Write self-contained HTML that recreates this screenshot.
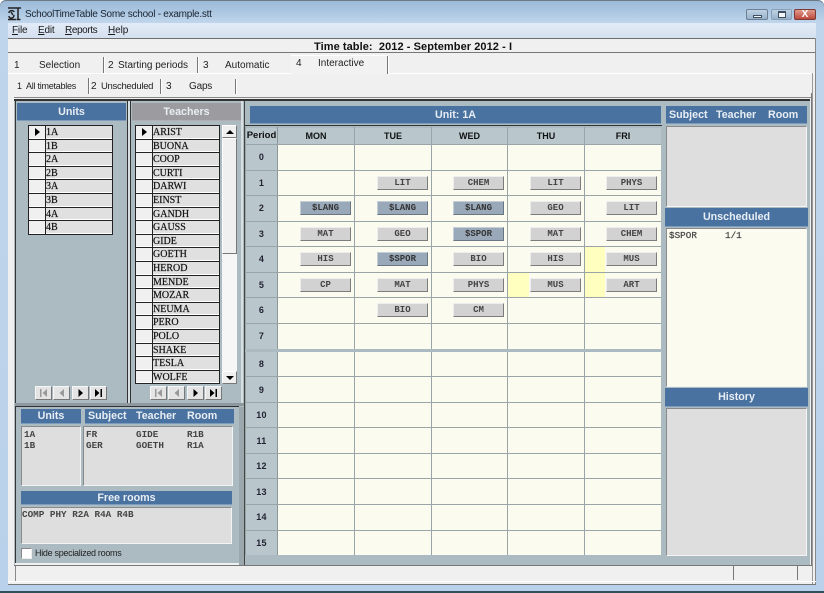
<!DOCTYPE html>
<html><head><meta charset="utf-8"><style>
html,body{margin:0;padding:0;width:824px;height:593px;overflow:hidden;background:#fff}
div,span,u{box-sizing:border-box}
.a{position:absolute}
#w{position:relative;width:824px;height:593px;overflow:hidden;font-family:"Liberation Sans",sans-serif;color:#111;background:linear-gradient(#9bb9d8 0,#a8c4e0 10px,#bfd5eb 22px,#b9d1ea 590px);border-radius:6px 6px 0 0;box-shadow:inset 0 1px 0 #6c7a88}
.t{position:absolute;white-space:pre;line-height:12px}
.h{position:absolute;background:#4a72a0;color:#e8eef4;font-weight:bold;font-size:10.7px;text-align:center;border:1px solid #7d9cbc;border-width:0 0 1px 0;white-space:pre}
.h span{position:absolute;top:0}
.p{position:absolute;background:#acbbc2}
.l{position:absolute;background:#9aa5a8}
.hd{position:absolute;background:#b9c6cb;font-weight:bold;font-size:9px;text-align:center;top:128px;height:16px;line-height:16px;color:#111}
.n{position:absolute;left:246px;width:31px;text-align:center;font:bold 9px/12px "Liberation Sans",sans-serif;color:#223;letter-spacing:.3px}
.b{position:absolute;width:51px;height:14px;background:#d2d2d2;border:1px solid;border-color:#eee #7c7c7c #7c7c7c #eee;font:bold 9px/13px "Liberation Mono",monospace;text-align:center;color:#444}
.b.g{background:#9aa9b9;border-color:#c5ced6 #6a7682 #6a7682 #c5ced6;color:#333}
.c{position:absolute;background:#dedede;border:1px solid;border-color:#8a8a8a #f4f4f4 #f4f4f4 #8a8a8a}
.m{position:absolute;font:bold 9.3px/11px "Liberation Mono",monospace;color:#444;white-space:pre}
.list{position:absolute;border:1px solid #222;border-top:0;background:#222}
.r{display:block;height:13.6px;border-top:1px solid #222;background:#e0e0e0;position:relative;font:10px/13px "Liberation Serif",serif;color:#111;-webkit-text-stroke:.2px #111;padding-left:17px;box-shadow:inset 0 -1px 0 #fff}
.r i{position:absolute;left:0;top:0;bottom:0;width:16px;background:#f0f0f0;border-right:1px solid #222;box-shadow:inset 0 -1px 0 #fff}
.r s{position:absolute;left:6px;top:2px;width:0;height:0;border-left:5px solid #000;border-top:4px solid transparent;border-bottom:4px solid transparent}
.nb{position:absolute;top:386px;width:17px;height:14px;background:#e4e4e4;border:1px solid;border-color:#f6f6f6 #777 #777 #f6f6f6}
.nb svg{display:block;width:15px;height:12px}
.tb{position:absolute;font-size:10px;line-height:12px;white-space:pre;color:#222}
.sp{position:absolute;width:1px;background:#777;box-shadow:1px 0 0 #fff}
</style></head><body><div id="w">

<!-- title bar -->
<svg class="a" style="left:7px;top:6px" width="15" height="15" viewBox="0 0 15 15"><path d="M1 2h13M2 7c0-3 5-3 5-1M7 9c0 4-5 4-5 1M4 6l2 3M1 13.500h8M11 2v11M9.500 13.500h4" fill="none" stroke="#222" stroke-width="1.500"/></svg>
<div class="t" style="left:25px;top:9px;font-size:10px;letter-spacing:-.25px;color:#1b2530">SchoolTimeTable Some school - example.stt</div>

<div class="a" style="left:746px;top:9px;width:22px;height:11px;background:linear-gradient(#c0d2e4,#98b2cc);border:1px solid #6d7f92;border-radius:2px"><div class="a" style="left:6px;top:5px;width:9px;height:3px;background:#f4f7fa;border:1px solid #3e4f60"></div></div>
<div class="a" style="left:771px;top:9px;width:21px;height:11px;background:linear-gradient(#c0d2e4,#98b2cc);border:1px solid #8ba0b4;border-radius:2px"><div class="a" style="left:6px;top:1px;width:8px;height:7px;background:#f4f7fa;border:1px solid #3e4f60;border-top-width:2px"></div></div>
<div class="a" style="left:794px;top:9px;width:22px;height:11px;background:linear-gradient(#e09a8c,#bd4a3c);border:1px solid #7d3a34;border-radius:2px;color:#fff;font:bold 10px/9px 'Liberation Sans',sans-serif;text-align:center">X</div>

<!-- menu -->
<div class="a" style="left:8px;top:23px;width:808px;height:15px;background:linear-gradient(#e2ebf7,#d5e0f0)"></div>
<div class="t" style="left:12px;top:25px;font-size:10px;letter-spacing:-.2px;color:#1a1a1a"><u>F</u>ile</div>
<div class="t" style="left:38px;top:25px;font-size:10px;letter-spacing:-.2px;color:#1a1a1a"><u>E</u>dit</div>
<div class="t" style="left:65px;top:25px;font-size:10px;letter-spacing:-.4px;color:#1a1a1a"><u>R</u>eports</div>
<div class="t" style="left:108px;top:25px;font-size:10px;letter-spacing:-.1px;color:#1a1a1a"><u>H</u>elp</div>

<!-- client -->
<div class="a" style="left:8px;top:38px;width:808px;height:546px;background:#f0f0f0"></div>
<div class="a" style="left:8px;top:38px;width:808px;height:1px;background:#6e6e6e"></div>
<div class="a" style="left:8px;top:52px;width:808px;height:1px;background:#777"></div>
<div class="t" style="left:314px;top:41px;font-size:11px;font-weight:bold;letter-spacing:.07px;color:#111">Time table:  2012 - September 2012 - I</div>

<!-- main tabs -->
<div class="tb" style="left:14px;top:60px">1</div><div class="tb" style="left:39px;top:60px">Selection</div>
<div class="sp" style="left:103px;top:57px;height:16px"></div>
<div class="tb" style="left:108px;top:60px">2</div><div class="tb" style="left:118px;top:60px">Starting periods</div>
<div class="sp" style="left:197px;top:57px;height:16px"></div>
<div class="tb" style="left:203px;top:60px">3</div><div class="tb" style="left:225px;top:60px">Automatic</div>
<div class="a" style="left:291px;top:55px;width:96px;height:19px;background:#f2f2f2;border-top:1px solid #fff"></div>
<div class="tb" style="left:296px;top:58px">4</div><div class="tb" style="left:318px;top:58px">Interactive</div>
<div class="sp" style="left:387px;top:56px;height:18px"></div>
<div class="a" style="left:8px;top:73px;width:283px;height:1px;background:#fff"></div>
<div class="a" style="left:388px;top:73px;width:427px;height:1px;background:#fff"></div>

<!-- sub tabs -->
<div class="tb" style="left:17px;top:80px;font-size:9px">1</div><div class="tb" style="left:26px;top:80px;font-size:9px;letter-spacing:-.25px">All timetables</div>
<div class="sp" style="left:88px;top:78px;height:16px"></div>
<div class="tb" style="left:91px;top:81px;">2</div><div class="tb" style="left:101px;top:81px;font-size:9.5px;letter-spacing:-.3px">Unscheduled</div>
<div class="sp" style="left:160px;top:79px;height:15px"></div>
<div class="tb" style="left:166px;top:81px">3</div><div class="tb" style="left:189px;top:81px;letter-spacing:-.2px">Gaps</div>
<div class="sp" style="left:235px;top:79px;height:15px"></div>

<!-- content area -->
<div class="a" style="left:14px;top:97px;width:798px;height:1px;background:#888"></div>
<div class="a" style="left:14px;top:99px;width:796px;height:2px;background:#333"></div>
<div class="a" style="left:811px;top:93px;width:1px;height:472px;background:#777"></div>
<div class="a" style="left:812px;top:73px;width:1px;height:511px;background:#999"></div>
<div class="a" style="left:815px;top:38px;width:1px;height:546px;background:#888"></div>

<div class="p" style="left:14px;top:101px;width:796px;height:464px"></div>
<div class="a" style="left:15px;top:101px;width:1px;height:464px;background:#333"></div>
<div class="a" style="left:127px;top:101px;width:1px;height:303px;background:#333"></div>
<div class="a" style="left:128px;top:101px;width:2px;height:303px;background:#d8dfe2"></div>
<div class="a" style="left:130px;top:101px;width:1px;height:303px;background:#333"></div>
<div class="a" style="left:241px;top:101px;width:2px;height:303px;background:#d8dfe2"></div>
<div class="a" style="left:244px;top:101px;width:1px;height:465px;background:#444"></div>
<div class="a" style="left:15px;top:403px;width:229px;height:3px;background:#8d999f"></div>
<div class="a" style="left:15px;top:406px;width:224px;height:1px;background:#333"></div>
<div class="a" style="left:239px;top:407px;width:5px;height:158px;background:#9ba8ae"></div>
<div class="a" style="left:15px;top:563px;width:224px;height:2px;background:#eef1f2"></div>

<!-- left lists -->
<div class="h" style="left:17px;top:103px;width:109px;height:18px;line-height:18px">Units</div>
<div class="h" style="left:132px;top:103px;width:109px;height:18px;line-height:18px;background:#9c9ca0;border-color:#b0b0b4">Teachers</div>

<div class="list" style="left:28px;top:125px;width:85px;height:110px">
<div class="r"><i><s></s></i>1A</div><div class="r"><i></i>1B</div><div class="r"><i></i>2A</div><div class="r"><i></i>2B</div><div class="r"><i></i>3A</div><div class="r"><i></i>3B</div><div class="r"><i></i>4A</div><div class="r"><i></i>4B</div>
</div>

<div class="list" style="left:135px;top:125px;width:85px;height:259px">
<div class="r"><i><s></s></i>ARIST</div><div class="r"><i></i>BUONA</div><div class="r"><i></i>COOP</div><div class="r"><i></i>CURTI</div><div class="r"><i></i>DARWI</div><div class="r"><i></i>EINST</div><div class="r"><i></i>GANDH</div><div class="r"><i></i>GAUSS</div><div class="r"><i></i>GIDE</div><div class="r"><i></i>GOETH</div><div class="r"><i></i>HEROD</div><div class="r"><i></i>MENDE</div><div class="r"><i></i>MOZAR</div><div class="r"><i></i>NEUMA</div><div class="r"><i></i>PERO</div><div class="r"><i></i>POLO</div><div class="r"><i></i>SHAKE</div><div class="r"><i></i>TESLA</div><div class="r"><i></i>WOLFE</div>
</div>

<!-- scrollbar -->
<div class="a" style="left:222px;top:125px;width:15px;height:259px;background:#f6f6f6"></div>
<div class="a" style="left:222px;top:125px;width:15px;height:13px;background:#f0f0f0;border:1px solid;border-color:#fff #777 #777 #fff"><div class="a" style="left:3px;top:4px;width:0;height:0;border-left:4px solid transparent;border-right:4px solid transparent;border-bottom:4px solid #000"></div></div>
<div class="a" style="left:222px;top:138px;width:15px;height:116px;background:#f0f0f0;border:1px solid;border-color:#fff #777 #777 #fff"></div>
<div class="a" style="left:222px;top:371px;width:15px;height:13px;background:#f0f0f0;border:1px solid;border-color:#fff #777 #777 #fff"><div class="a" style="left:3px;top:4px;width:0;height:0;border-left:4px solid transparent;border-right:4px solid transparent;border-top:4px solid #000"></div></div>

<!-- nav buttons -->
<div class="nb" style="left:35px"><svg viewBox="0 0 15 12"><path d="M4 2h1.500v8H4zM11 2v8L6.500 6z" fill="#999"/></svg></div>
<div class="nb" style="left:53px"><svg viewBox="0 0 15 12"><path d="M10 2v8L5.500 6z" fill="#999"/></svg></div>
<div class="nb" style="left:72px"><svg viewBox="0 0 15 12"><path d="M5.500 2v8L10 6z" fill="#000"/></svg></div>
<div class="nb" style="left:90px"><svg viewBox="0 0 15 12"><path d="M4 2v8L8.500 6zM9.500 2H11v8H9.500z" fill="#000"/></svg></div>
<div class="nb" style="left:150px"><svg viewBox="0 0 15 12"><path d="M4 2h1.500v8H4zM11 2v8L6.500 6z" fill="#999"/></svg></div>
<div class="nb" style="left:168px"><svg viewBox="0 0 15 12"><path d="M10 2v8L5.500 6z" fill="#999"/></svg></div>
<div class="nb" style="left:187px"><svg viewBox="0 0 15 12"><path d="M5.500 2v8L10 6z" fill="#000"/></svg></div>
<div class="nb" style="left:205px"><svg viewBox="0 0 15 12"><path d="M4 2v8L8.500 6zM9.500 2H11v8H9.500z" fill="#000"/></svg></div>

<!-- bottom-left -->
<div class="h" style="left:21px;top:409px;width:60px;height:15px;line-height:15px">Units</div>
<div class="h" style="left:85px;top:409px;width:149px;height:15px;line-height:15px"><span style="left:3px">Subject</span><span style="left:51px">Teacher</span><span style="left:102px">Room</span></div>
<div class="c" style="left:21px;top:426px;width:60px;height:60px"></div>
<div class="c" style="left:83px;top:426px;width:150px;height:60px"></div>
<div class="m" style="left:24px;top:429px">1A
1B</div>
<div class="m" style="left:86px;top:429px">FR</div><div class="m" style="left:136px;top:429px">GIDE</div><div class="m" style="left:187px;top:429px">R1B</div>
<div class="m" style="left:86px;top:440px">GER</div><div class="m" style="left:136px;top:440px">GOETH</div><div class="m" style="left:187px;top:440px">R1A</div>
<div class="h" style="left:21px;top:491px;width:211px;height:14px;line-height:14px">Free rooms</div>
<div class="c" style="left:21px;top:507px;width:211px;height:37px"></div>
<div class="m" style="left:22px;top:509px">COMP PHY R2A R4A R4B</div>
<div class="a" style="left:21px;top:548px;width:11px;height:11px;background:#fff;border:1px solid;border-color:#888 #eee #eee #888"></div>
<div class="t" style="left:35px;top:547px;font-size:9px;letter-spacing:-.3px;color:#222">Hide specialized rooms</div>

<!-- grid -->
<div class="h" style="left:250px;top:106px;width:411px;height:18px;line-height:18px">Unit: 1A</div>
<div class="a" style="left:245px;top:125px;width:417px;height:1px;background:#333"></div>
<div class="a" style="left:278px;top:145px;width:383px;height:410px;background:#fbfbf0"></div>

<div class="a" style="left:508px;top:273px;width:21px;height:24px;background:#ffffc0"></div>
<div class="a" style="left:585px;top:247px;width:20px;height:50px;background:#ffffc0"></div>

<div class="hd" style="left:246px;width:31px;font-size:9.500px">Period</div>
<div class="hd" style="left:278px;width:76px">MON</div>
<div class="hd" style="left:355px;width:76px">TUE</div>
<div class="hd" style="left:432px;width:75px">WED</div>
<div class="hd" style="left:508px;width:76px">THU</div>
<div class="hd" style="left:585px;width:76px">FRI</div>
<div class="a" style="left:246px;top:145px;width:31px;height:410px;background:#b9c6cb"></div>

<div class="l" style="left:245px;top:127px;width:1px;height:428px"></div>
<div class="l" style="left:277px;top:127px;width:1px;height:428px;background:#8b979b"></div>
<div class="l" style="left:354px;top:127px;width:1px;height:428px"></div>
<div class="l" style="left:431px;top:127px;width:1px;height:428px"></div>
<div class="l" style="left:507px;top:127px;width:1px;height:428px"></div>
<div class="l" style="left:584px;top:127px;width:1px;height:428px"></div>

<div class="l" style="left:245px;top:144px;width:416px;height:1px"></div>
<div class="l" style="left:245px;top:170px;width:416px;height:1px"></div>
<div class="l" style="left:245px;top:195px;width:416px;height:1px"></div>
<div class="l" style="left:245px;top:221px;width:416px;height:1px"></div>
<div class="l" style="left:245px;top:246px;width:416px;height:1px"></div>
<div class="l" style="left:245px;top:272px;width:416px;height:1px"></div>
<div class="l" style="left:245px;top:297px;width:416px;height:1px"></div>
<div class="l" style="left:245px;top:323px;width:416px;height:1px"></div>
<div class="l" style="left:245px;top:349px;width:416px;height:3px;background:#acbbc2"></div>
<div class="l" style="left:245px;top:376px;width:416px;height:1px"></div>
<div class="l" style="left:245px;top:402px;width:416px;height:1px"></div>
<div class="l" style="left:245px;top:427px;width:416px;height:1px"></div>
<div class="l" style="left:245px;top:453px;width:416px;height:1px"></div>
<div class="l" style="left:245px;top:478px;width:416px;height:1px"></div>
<div class="l" style="left:245px;top:504px;width:416px;height:1px"></div>
<div class="l" style="left:245px;top:530px;width:416px;height:1px"></div>

<div class="n" style="top:151px">0</div>
<div class="n" style="top:177px">1</div>
<div class="n" style="top:202px">2</div>
<div class="n" style="top:228px">3</div>
<div class="n" style="top:253px">4</div>
<div class="n" style="top:279px">5</div>
<div class="n" style="top:304px">6</div>
<div class="n" style="top:330px">7</div>
<div class="n" style="top:358px">8</div>
<div class="n" style="top:384px">9</div>
<div class="n" style="top:409px">10</div>
<div class="n" style="top:435px">11</div>
<div class="n" style="top:460px">12</div>
<div class="n" style="top:486px">13</div>
<div class="n" style="top:511px">14</div>
<div class="n" style="top:537px">15</div>

<div class="b" style="left:377px;top:176px">LIT</div>
<div class="b" style="left:453px;top:176px">CHEM</div>
<div class="b" style="left:530px;top:176px">LIT</div>
<div class="b" style="left:606px;top:176px">PHYS</div>

<div class="b g" style="left:300px;top:201px">$LANG</div>
<div class="b g" style="left:377px;top:201px">$LANG</div>
<div class="b g" style="left:453px;top:201px">$LANG</div>
<div class="b" style="left:530px;top:201px">GEO</div>
<div class="b" style="left:606px;top:201px">LIT</div>

<div class="b" style="left:300px;top:227px">MAT</div>
<div class="b" style="left:377px;top:227px">GEO</div>
<div class="b g" style="left:453px;top:227px">$SPOR</div>
<div class="b" style="left:530px;top:227px">MAT</div>
<div class="b" style="left:606px;top:227px">CHEM</div>

<div class="b" style="left:300px;top:252px">HIS</div>
<div class="b g" style="left:377px;top:252px">$SPOR</div>
<div class="b" style="left:453px;top:252px">BIO</div>
<div class="b" style="left:530px;top:252px">HIS</div>
<div class="b" style="left:606px;top:252px">MUS</div>

<div class="b" style="left:300px;top:278px">CP</div>
<div class="b" style="left:377px;top:278px">MAT</div>
<div class="b" style="left:453px;top:278px">PHYS</div>
<div class="b" style="left:530px;top:278px">MUS</div>
<div class="b" style="left:606px;top:278px">ART</div>

<div class="b" style="left:377px;top:303px">BIO</div>
<div class="b" style="left:453px;top:303px">CM</div>

<!-- right column -->
<div class="h" style="left:666px;top:106px;width:141px;height:18px;line-height:18px"><span style="left:3px">Subject</span><span style="left:50px">Teacher</span><span style="left:102px">Room</span></div>
<div class="c" style="left:666px;top:126px;width:141px;height:81px"></div>
<div class="h" style="left:665px;top:208px;width:143px;height:19px;line-height:19px">Unscheduled</div>
<div class="c" style="left:666px;top:228px;width:141px;height:159px;background:#fbfbf0"></div>
<div class="m" style="left:669px;top:230px;font-weight:normal;-webkit-text-stroke:.2px #444">$SPOR</div>
<div class="m" style="left:725px;top:230px;font-weight:normal;-webkit-text-stroke:.2px #444">1/1</div>
<div class="h" style="left:665px;top:388px;width:143px;height:19px;line-height:19px">History</div>
<div class="c" style="left:666px;top:408px;width:141px;height:148px"></div>

<!-- status bar -->
<div class="a" style="left:14px;top:565px;width:798px;height:1px;background:#777"></div>
<div class="a" style="left:8px;top:581px;width:808px;height:1px;background:#fff"></div>
<div class="a" style="left:8px;top:584px;width:808px;height:1px;background:#777"></div>
<div class="a" style="left:15px;top:566px;width:1px;height:15px;background:#888"></div>
<div class="a" style="left:733px;top:566px;width:1px;height:14px;background:#777"></div>
<div class="a" style="left:797px;top:566px;width:1px;height:14px;background:#777"></div>

<div class="a" style="left:0;top:591px;width:824px;height:2px;background:#2f5058"></div>
</div></body></html>
